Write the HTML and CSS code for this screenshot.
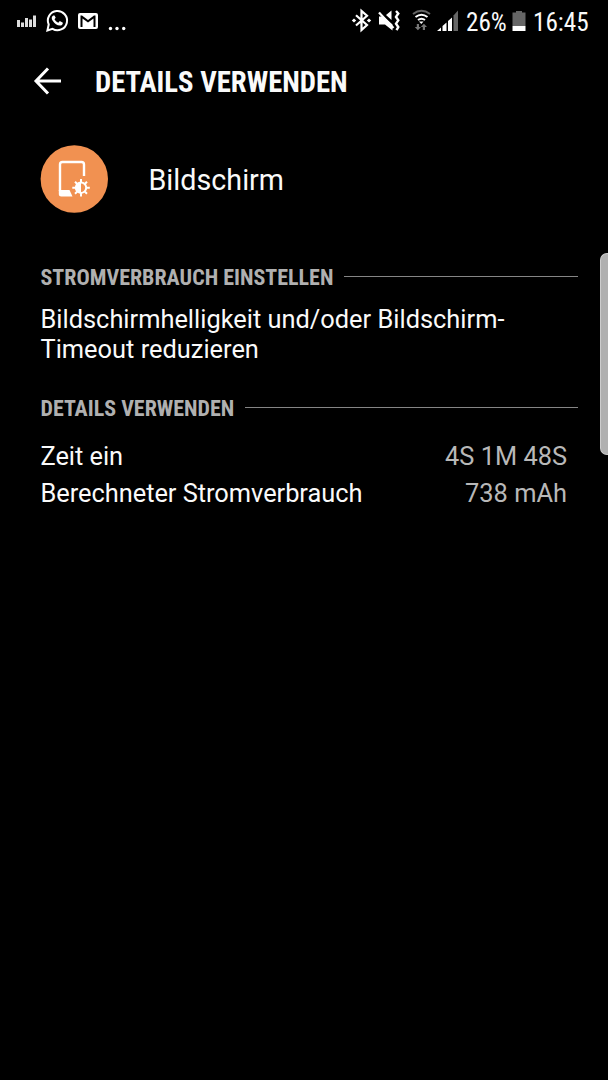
FILE: index.html
```html
<!DOCTYPE html>
<html lang="de">
<head>
<meta charset="utf-8">
<title>Details verwenden</title>
<link rel="stylesheet" href="styles.css">
</head>
<body>
<div class="screen">
  <header class="status">
    <svg class="status-left" width="140" height="44" viewBox="0 0 140 44" fill="#fff">
      <path d="M17 20h3v7h-3zM21 22.5h3V27h-3zM25 18h3v9h-3zM29 19.500h3V27h-3zM33 15.500h3V27h-3z" fill="#ddd"/>
      <path d="M48.700 24.500A9.600 9.600 0 1 1 52.500 28.800L47.400 30.500z" fill="none" stroke="#fff" stroke-width="2"/>
      <path d="M53.300 15.500c-2 1-2 3.200-.6 5.300 1.900 2.900 4.300 4.800 7.300 4.800 1.400 0 2.800-1 2.900-2.900l-3.100-1.600-1.500 1.600c-1.900-.8-3-2-3.800-3.500l1.200-1.500-1.200-2.300z"/>
      <path fill-rule="evenodd" d="M80 13h16q2 0 2 2v12q0 2-2 2H80q-2 0-2-2V15q0-2 2-2zM80.500 27h2v-8.500l5.500 4 5.500-4V27h2V15.500h-1.500l-6 4.500-6-4.500h-1.500z"/>
      <circle cx="110.500" cy="28.500" r="1.700"/><circle cx="117" cy="28.500" r="1.700"/><circle cx="123.700" cy="28.500" r="1.700"/>
    </svg>
    <div class="status-right">
      <svg width="124" height="44" viewBox="340 0 124 44" fill="#fff">
        <path d="M356 15.200l11 9.800-5.500 5V11l5.500 4.700-11 9.800" fill="none" stroke="#fff" stroke-width="2.200"/>
        <path d="M351.800 20.500l2.200-1.900 2.200 1.900-2.200 1.900zM366.800 20.500l2.200-1.900 2.200 1.900-2.200 1.900z"/>
        <path d="M379 16.500h4.500l9 8v6l-7.500-6h-6zM386 15l5.500-4.500v9.500z"/>
        <path d="M379 12.500l14.500 15.500" stroke="#fff" stroke-width="2.200"/>
        <path d="M396 11l2.300 2.500-2.300 3.400 2.300 3.400-2.300 3.400 2.300 3.400-1.800 3" fill="none" stroke="#fff" stroke-width="2.400"/>
        <g fill="none" stroke-width="2">
          <path d="M413 14q8.500-6.500 17 0" stroke="#666"/>
          <path d="M415.500 17q6-4.600 12 0M418 20q3.500-2.600 7 0" stroke="#fff"/>
        </g>
        <path d="M419 21.500h4.500l-2.200 2.400z"/>
        <path d="M416.800 24h2.200v3h2l-3.100 3.200-3.100-3.200h2zM422.800 30v-3h-2l3.100-3.200 3.100 3.200h-2v3z" fill="#777"/>
        <path d="M437 31l4-3.500V31zM442.500 26l4-3.500V31h-4zM448 21l4-3.500V31h-4z"/>
        <path d="M453.500 15.500l4.500-5V31h-4.500z" fill="#666"/>
      </svg>
      <span class="status-text percent">26%</span>
      <svg class="battery" width="14" height="44" viewBox="0 0 14 44"><path d="M4 11h6v1.500h3.500V26H.500V12.500H4z" fill="#666"/><path d="M.500 26h13v5H.500z" fill="#fff"/></svg>
      <span class="status-text clock">16:45</span>
    </div>
  </header>
  <div class="toolbar">
    <svg width="28" height="28" viewBox="0 0 28 28" fill="none" stroke="#fff" stroke-width="3"><path d="M15 1.500L3 14l12 12.500M3 14H28"/></svg>
    <h1 class="title"><span class="condensed">DETAILS VERWENDEN</span></h1>
  </div>
  <div class="item">
    <svg width="68" height="68" viewBox="0 0 68 68">
      <circle cx="34.300" cy="34" r="33.700" fill="#f19151"/>
      <path d="M20 46V19.500q0-2.500 2.500-2.500h19q2.500 0 2.500 2.500v11.500" fill="none" stroke="#fff" stroke-width="2.400"/>
      <path d="M18.800 45h10.700l3 6.500H21.300q-2.500 0-2.500-2.500z" fill="#fff"/>
      <g stroke="#fff" stroke-width="2"><path d="M41 34v17.500M32.300 42.700h17.500M35 36.700l12 12M47 36.700l-12 12"/></g>
      <circle cx="41" cy="42.700" r="5.200" fill="#f19151" stroke="#fff" stroke-width="2"/>
      <path d="M41 37.500a5.200 5.200 0 0 0 0 10.400z" fill="#fff"/>
    </svg>
    <span class="item-name">Bildschirm</span>
  </div>
  <h2 class="section"><span class="condensed">STROMVERBRAUCH EINSTELLEN</span></h2>
  <p class="advice">Bildschirmhelligkeit und/oder Bildschirm-<br>Timeout reduzieren</p>
  <h2 class="section second"><span class="condensed">DETAILS VERWENDEN</span></h2>
  <dl class="details">
    <div class="row"><dt>Zeit ein</dt><dd>4S 1M 48S</dd></div>
    <div class="row"><dt>Berechneter Stromverbrauch</dt><dd>738 mAh</dd></div>
  </dl>
  <div class="edge-handle"></div>
</div>
</body>
</html>
```
FILE: styles.css
```css
* { box-sizing: border-box; }
body { margin: 0; background: #000; }
svg { display: block; flex: none; }
h1, h2, p, dl, dd { margin: 0; }
.screen {
  position: relative;
  width: 608px;
  height: 1080px;
  overflow: hidden;
  background: #000;
  color: #fafafa;
  font: 25.400px/30px Roboto, sans-serif;
}
.status { display: flex; justify-content: space-between; height: 44px; }
.status-right { display: flex; width: 268px; }
.status-text {
  font: 25.200px/46px "Roboto Condensed", Roboto, sans-serif;
  font-stretch: 75%;
  white-space: nowrap;
}
.percent { width: 46px; padding-left: 2px; }
.battery { margin-left: 2px; }
.clock { margin-left: 7px; }
.toolbar { display: flex; align-items: center; height: 74px; padding-left: 33px; }
.title { margin-left: 34px; padding-top: 1px; font-size: 28.700px; line-height: 34px; }
.condensed {
  font-family: "Roboto Condensed", Roboto, sans-serif;
  font-stretch: 75%;
  font-weight: 700;
  white-space: nowrap;
}
.item { display: flex; align-items: center; height: 68px; margin-top: 27px; padding-left: 40px; }
.item-name { margin-left: 40.500px; padding-top: 1px; font-size: 28.700px; line-height: 34px; }
.section {
  display: flex;
  align-items: center;
  height: 26px;
  margin: 50px 30px 0 40.500px;
  color: #b0b0b0;
  font-size: 22px;
  line-height: 26px;
}
.section .condensed { padding-top: 3px; }
.section::after { content: ""; flex: 1; height: 1px; margin-left: 10.500px; background: #858585; }
.advice { margin: 15px 0 0 40.500px; }
.second { margin-top: 30px; }
.details { margin: 21px 41px 0 40.500px; }
.row { display: flex; justify-content: space-between; height: 37px; }
.row dt { letter-spacing: -.03px; }
.row dd { color: #b8b8b8; }
.edge-handle {
  position: absolute;
  top: 253px;
  right: 0;
  width: 8px;
  height: 202px;
  border: 1px solid #ccc;
  border-right: 0;
  border-radius: 7px 0 0 7px;
  background: #b0b0b0;
}
```
